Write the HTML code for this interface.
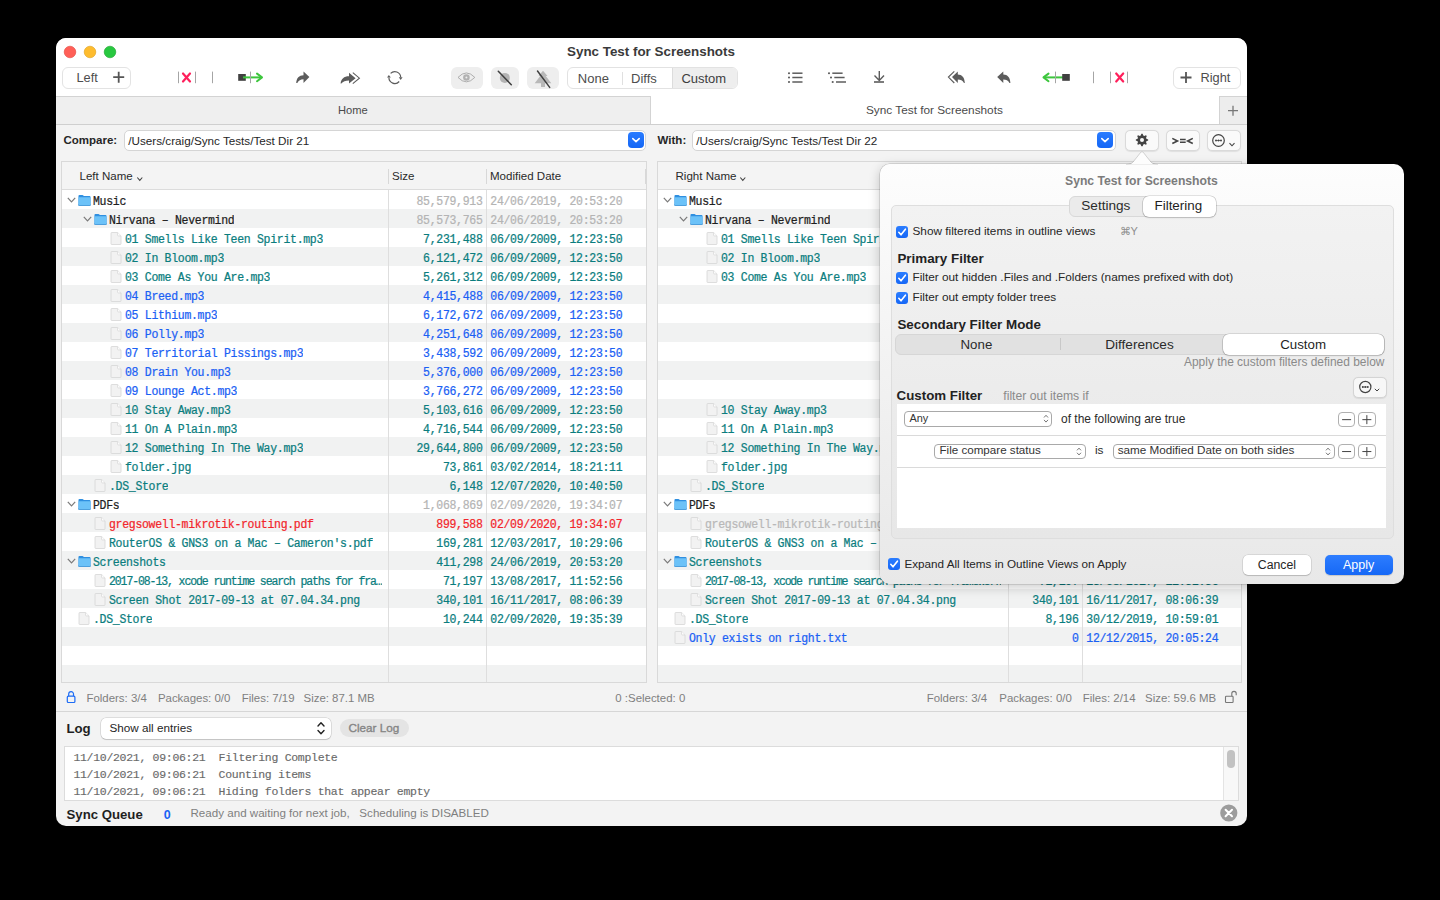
<!DOCTYPE html>
<html><head><meta charset="utf-8"><style>
*{margin:0;padding:0;box-sizing:border-box}
html,body{width:1440px;height:900px;background:#000;overflow:hidden;font-family:"Liberation Sans",sans-serif;}
.abs{position:absolute}
#win{position:absolute;left:56px;top:38px;width:1191px;height:788px;border-radius:10px;background:#f3f3f3;overflow:hidden}
#toolbar{position:absolute;left:0;top:0;width:1191px;height:58px;background:#ffffff}
.t{position:absolute;white-space:nowrap;line-height:1}
.tbl{position:absolute;border:1px solid #d9d9d9;background:#fff;overflow:hidden}
.thead{position:absolute;left:0;top:0;right:0;height:28px;background:#f4f4f4;border-bottom:1px solid #dcdcdc}
.th{position:absolute;top:9px;font-size:11.55px;color:#2a2a2a;white-space:nowrap;line-height:1}
.sort{margin-left:3px;position:relative;top:1.5px}
.hdiv{position:absolute;top:7px;width:1px;height:15px;background:#d8d8d8}
.tbody{position:absolute;left:0;top:28px;right:0;bottom:0}
.row{position:absolute;left:0;right:0;height:19px}
.nm,.sz{position:absolute;top:0;font-family:"Liberation Mono",monospace;font-size:11.5px;letter-spacing:-0.3px;line-height:19px;white-space:nowrap;padding-top:1.5px;-webkit-text-stroke:0.22px currentColor;transform:scaleY(1.07);transform-origin:0 14px}
.chev{position:absolute;top:7px;line-height:0}
.ico{position:absolute;line-height:0}
.vdiv{position:absolute;top:0;bottom:0;width:1px;background:#dedede}

.lbl{position:absolute;white-space:nowrap;line-height:1}
</style></head>
<body>
<div id="win">
<div id="toolbar"></div>
<div class="abs" style="left:0;top:58px;width:595px;height:28px;background:#efefef;border-top:1px solid #d3d3d3;border-right:1px solid #d3d3d3"></div>
<div class="abs" style="left:595px;top:58px;width:568px;height:28px;background:#ffffff"></div>
<div class="abs" style="left:1163px;top:58px;width:28px;height:28px;background:#ededed;border-top:1px solid #d3d3d3;border-left:1px solid #d3d3d3"></div>
<div class="abs" style="left:0;top:86px;width:1191px;height:1px;background:#cfcfcf"></div>
</div>
<div class="lbl" style="left:567px;top:45px;font-size:13.4px;font-weight:bold;color:#3a3a3a">Sync Test for Screenshots</div>
<div class="abs" style="left:62px;top:67px;width:69px;height:22px;border:1px solid #e3e3e3;border-radius:6px;background:#fff"></div>
<div class="lbl" style="left:76.5px;top:71.5px;font-size:12.8px;color:#4d4d4d">Left</div>
<div class="abs" style="left:1173px;top:67px;width:68px;height:22px;border:1px solid #e3e3e3;border-radius:6px;background:#fff"></div>
<div class="lbl" style="left:1200.5px;top:71.5px;font-size:12.8px;color:#4d4d4d">Right</div>
<div class="abs" style="left:451px;top:67px;width:32px;height:22px;border-radius:6px;background:#eeeeee"></div>
<div class="abs" style="left:491px;top:67px;width:28px;height:22px;border-radius:6px;background:#eeeeee"></div>
<div class="abs" style="left:527px;top:67px;width:32px;height:22px;border-radius:6px;background:#eeeeee"></div>
<div class="abs" style="left:567px;top:67px;width:171px;height:22px;border:1px solid #e2e2e2;border-radius:6px;background:#fff;overflow:hidden"><div class="abs" style="left:104px;top:0;width:66px;height:20px;background:#eeeeee;border-left:1px solid #dcdcdc"></div><div class="abs" style="left:53.5px;top:4px;width:1px;height:13px;background:#e0e0e0"></div></div>
<div class="lbl" style="left:577.8px;top:71.5px;font-size:13px;color:#4d4d4d">None</div>
<div class="lbl" style="left:631px;top:71.5px;font-size:13px;color:#4d4d4d">Diffs</div>
<div class="lbl" style="left:681.4px;top:71.5px;font-size:13px;color:#3d3d3d">Custom</div>
<div class="lbl" style="left:338px;top:104.5px;font-size:11.15px;color:#4a4a4a">Home</div>
<div class="lbl" style="left:866px;top:104.5px;font-size:11.8px;color:#4a4a4a">Sync Test for Screenshots</div>
<div class="lbl" style="left:63.5px;top:135px;font-size:11.5px;font-weight:bold;color:#262626">Compare:</div>
<div class="abs" style="left:124px;top:130px;width:522px;height:21px;border:1px solid #d5d5d5;border-radius:5px;background:#fff"></div>
<div class="lbl" style="left:128.3px;top:135px;font-size:11.7px;color:#262626">/Users/craig/Sync Tests/Test Dir 21</div>
<div class="abs" style="left:628px;top:132px;width:16px;height:16px;border-radius:4px;background:linear-gradient(#2a7cff,#1466f5)"></div><svg class="abs" style="left:628px;top:132px" width="16" height="16"><path d="M4.8 6.6 L8 9.6 L11.2 6.6" fill="none" stroke="#fff" stroke-width="1.6" stroke-linecap="round" stroke-linejoin="round"/></svg>
<div class="lbl" style="left:657.6px;top:135px;font-size:11.5px;font-weight:bold;color:#262626">With:</div>
<div class="abs" style="left:692px;top:130px;width:424px;height:21px;border:1px solid #d5d5d5;border-radius:5px;background:#fff"></div>
<div class="lbl" style="left:696.3px;top:135px;font-size:11.7px;color:#262626">/Users/craig/Sync Tests/Test Dir 22</div>
<div class="abs" style="left:1097px;top:132px;width:16px;height:16px;border-radius:4px;background:linear-gradient(#2a7cff,#1466f5)"></div><svg class="abs" style="left:1097px;top:132px" width="16" height="16"><path d="M4.8 6.6 L8 9.6 L11.2 6.6" fill="none" stroke="#fff" stroke-width="1.6" stroke-linecap="round" stroke-linejoin="round"/></svg>
<div class="abs" style="left:1125px;top:130px;width:34px;height:21px;border:1px solid #dadada;border-radius:5px;background:#fafafa;box-shadow:0 0.5px 1px rgba(0,0,0,0.08)"></div>
<div class="abs" style="left:1166px;top:130px;width:34px;height:21px;border:1px solid #dadada;border-radius:5px;background:#fafafa;box-shadow:0 0.5px 1px rgba(0,0,0,0.08)"></div>
<div class="abs" style="left:1207px;top:130px;width:34px;height:21px;border:1px solid #dadada;border-radius:5px;background:#fafafa;box-shadow:0 0.5px 1px rgba(0,0,0,0.08)"></div>
<svg class="abs" style="left:1160px;top:130px" width="40" height="20"><path d="M12.3 8.4 L17.5 10.95 L12.3 13.5 M32.8 8.4 L27.6 10.95 L32.8 13.5" fill="none" stroke="#444" stroke-width="1.6" stroke-linejoin="miter"/><path d="M20 9.6 H25.7 M20 12.3 H25.7" stroke="#444" stroke-width="1.5"/></svg>
<svg class="abs" style="left:1120px;top:125px" width="130" height="30"><polygon points="21.39,8.83 22.61,8.83 23.34,10.60 24.17,10.94 25.93,10.21 26.79,11.07 26.06,12.83 26.40,13.66 28.17,14.39 28.17,15.61 26.40,16.34 26.06,17.17 26.79,18.93 25.93,19.79 24.17,19.06 23.34,19.40 22.61,21.17 21.39,21.17 20.66,19.40 19.83,19.06 18.07,19.79 17.21,18.93 17.94,17.17 17.60,16.34 15.83,15.61 15.83,14.39 17.60,13.66 17.94,12.83 17.21,11.07 18.07,10.21 19.83,10.94 20.66,10.60" fill="#444"/><circle cx="22" cy="15" r="2" fill="#fafafa"/><circle cx="98.5" cy="15.5" r="5.8" fill="none" stroke="#444" stroke-width="1.2"/><path d="M95.5 15.5 H101.5" stroke="#444" stroke-width="0.7"/><circle cx="96" cy="15.5" r="0.9" fill="#444"/><circle cx="98.5" cy="15.5" r="0.9" fill="#444"/><circle cx="101" cy="15.5" r="0.9" fill="#444"/><path d="M109.5 18.2 L112 20.8 L114.5 18.2" fill="none" stroke="#444" stroke-width="1.1"/></svg>
<svg class="abs" style="left:0;top:0" width="1440" height="125"><circle cx="70" cy="52" r="5.8" fill="#ff5f57" stroke="#e2453c" stroke-width="0.6"/><circle cx="90" cy="52" r="5.8" fill="#febc2e" stroke="#de9f1a" stroke-width="0.6"/><circle cx="110" cy="52" r="5.8" fill="#28c840" stroke="#1aa32a" stroke-width="0.6"/><rect x="178.0" y="71.6" width="1" height="11.6" fill="#a5a5a5"/><rect x="195.0" y="71.6" width="1" height="11.6" fill="#a5a5a5"/><rect x="212.0" y="71.6" width="1" height="11.6" fill="#a5a5a5"/><path d="M183 73.5 L190 81.5 M190 73.5 L183 81.5" stroke="#ff1f5b" stroke-width="2.2" stroke-linecap="round"/><rect x="238.2" y="74" width="7.6" height="6.8" fill="#404040"/><path d="M243 77.4 H261.5" stroke="#3dc63d" stroke-width="2"/><path d="M257 73.6 L262 77.4 L257 81.2" fill="none" stroke="#3dc63d" stroke-width="2" stroke-linecap="round" stroke-linejoin="round"/><rect x="250.0" y="71.6" width="1" height="11.6" fill="#a5a5a5"/><path d="M303.5 71.5 L309.4 77 L303.5 82.9 L303.5 79.3 C300.5 79.3 298.8 80.5 297.3 82.9 L296.2 82.9 C296.6 78 299 75.2 303.5 75.2 Z" fill="#5c5c5c"/><path d="M349 72.7 L355.6 78.2 L349 83.5 L349 80.4 C345.5 80.4 343 81.3 341.3 83.5 L340.6 83.5 C341 79 344 76.3 349 76.3 Z" fill="#5c5c5c"/><path d="M352.8 72.6 L359.4 78.2 L352.8 83.6" fill="none" stroke="#5c5c5c" stroke-width="1.1"/><path d="M390.6 73.4 A5.9 5.9 0 0 1 400.7 77.2" fill="none" stroke="#5c5c5c" stroke-width="1.2"/><path d="M399.2 81.5 A5.9 5.9 0 0 1 388.9 77.6" fill="none" stroke="#5c5c5c" stroke-width="1.2"/><path d="M398.8 77.2 L402.6 77.2 L400.7 79.9 Z" fill="#5c5c5c"/><path d="M387 77.6 L390.8 77.6 L388.9 74.9 Z" fill="#5c5c5c"/><path d="M458 77.4 Q466.4 68.5 474.8 77.4 Q466.4 86.3 458 77.4 Z" fill="none" stroke="#a6a6a6" stroke-width="0.9"/><circle cx="466.4" cy="77.5" r="3.3" fill="#b2b2b2"/><circle cx="466.4" cy="77.5" r="1" fill="#eee"/><circle cx="504.8" cy="77.9" r="5" fill="#b3b3b3"/><path d="M498.3 71.3 L511.3 84.7" stroke="#3f3f3f" stroke-width="1.5" stroke-linecap="round"/><path d="M543 70.7 L547.5 76 L545.8 76 L551.3 83.2 L545 83.2 L545 87 L541 87 L541 83.2 L534.7 83.2 L540.2 76 L538.5 76 Z" fill="#b8b8b8"/><path d="M537.5 71 L549.7 87.4" stroke="#3f3f3f" stroke-width="1.5" stroke-linecap="round"/><circle cx="789" cy="73.2" r="1.05" fill="#5c5c5c"/><path d="M792.3 73.2 H802.5" stroke="#5c5c5c" stroke-width="1.5"/><circle cx="789" cy="77.5" r="1.05" fill="#5c5c5c"/><path d="M792.3 77.5 H802.5" stroke="#5c5c5c" stroke-width="1.5"/><circle cx="789" cy="82" r="1.05" fill="#5c5c5c"/><path d="M792.3 82 H802.5" stroke="#5c5c5c" stroke-width="1.5"/><circle cx="829" cy="73.2" r="1.05" fill="#5c5c5c"/><path d="M832.3 73.2 H842.6" stroke="#5c5c5c" stroke-width="1.5"/><circle cx="831" cy="77.5" r="1.05" fill="#5c5c5c"/><path d="M834.3 77.5 H844.6" stroke="#5c5c5c" stroke-width="1.5"/><circle cx="832.7" cy="82" r="1.05" fill="#5c5c5c"/><path d="M836.0 82 H846" stroke="#5c5c5c" stroke-width="1.5"/><path d="M879.3 70.9 V80.4 M874.5 75.6 L879.3 80.4 L884 75.6" fill="none" stroke="#5c5c5c" stroke-width="1.4"/><rect x="874" y="81.2" width="10" height="1.6" fill="#5c5c5c"/><path d="M952 77.1 L957.8 71.5 L957.8 74.6 C962 74.6 964.6 77.5 964.8 82.9 L964 82.9 C962.5 80.6 960.8 79.6 957.8 79.6 L957.8 82.9 Z" fill="#5c5c5c"/><path d="M954.3 71.3 L948.4 77.1 L954.3 83" fill="none" stroke="#5c5c5c" stroke-width="1.1"/><path d="M997.2 77.1 L1003.3 71.5 L1003.3 74.6 C1007.6 74.6 1010.1 77.5 1010.4 82.9 L1009.5 82.9 C1008 80.6 1006.3 79.6 1003.3 79.6 L1003.3 82.9 Z" fill="#5c5c5c"/><path d="M1044 77.4 H1064" stroke="#3dc63d" stroke-width="2"/><path d="M1048.5 73.6 L1043.5 77.4 L1048.5 81.2" fill="none" stroke="#3dc63d" stroke-width="2" stroke-linecap="round" stroke-linejoin="round"/><rect x="1062.2" y="74" width="7.6" height="6.8" fill="#404040"/><rect x="1055.0" y="71.6" width="1" height="11.6" fill="#a5a5a5"/><rect x="1093.0" y="71.6" width="1" height="11.6" fill="#a5a5a5"/><rect x="1110.0" y="71.6" width="1" height="11.6" fill="#a5a5a5"/><rect x="1127.0" y="71.6" width="1" height="11.6" fill="#a5a5a5"/><path d="M1116.2 73.5 L1123.2 81.5 M1123.2 73.5 L1116.2 81.5" stroke="#ff1f5b" stroke-width="2.2" stroke-linecap="round"/><path d="M118.7 71.7 V82.7 M113.2 77.2 H124.2" stroke="#555" stroke-width="1.8"/><path d="M1186 72 V83 M1180.5 77.5 H1191.5" stroke="#555" stroke-width="1.8"/><path d="M1233 105.7 V115.7 M1228 110.7 H1238" stroke="#777" stroke-width="1.3"/></svg>
<div class="tbl" style="left:61px;top:161px;width:586px;height:522px">
<div class="thead"><span class="th" style="left:17.5px">Left Name<svg class="sort" width="8" height="6" viewBox="0 0 8 6"><path d="M1.3 1.5 L3.8 4.3 L6.3 1.5" fill="none" stroke="#444" stroke-width="1.1"/></svg></span>
<span class="th" style="left:330px">Size</span><span class="th" style="left:428px">Modified Date</span>
<div class="hdiv" style="left:326px"></div><div class="hdiv" style="left:424px"></div><div class="hdiv" style="left:583px"></div>
</div>
<div class="tbody">
<div class="row" style="top:0px;background:#ffffff">
<span class="chev" style="left:5px"><svg width="9" height="6" viewBox="0 0 9 6"><path d="M0.8 0.8 L4.5 4.8 L8.2 0.8" fill="none" stroke="#7a7a7a" stroke-width="1.2"/></svg></span>
<span class="ico" style="left:15.5px;top:4.3px"><svg width="13" height="12.2" viewBox="0 0 14 13"><path d="M0.5 2.2 Q0.5 1 1.6 1 L4.8 1 Q5.4 1 5.8 1.5 L6.3 2 L12.4 2 Q13.5 2 13.5 3.1 L13.5 11.4 Q13.5 12.5 12.4 12.5 L1.6 12.5 Q0.5 12.5 0.5 11.4 Z" fill="#2f8fe0"/><path d="M0.5 4.3 Q0.5 3.4 1.5 3.4 L12.5 3.4 Q13.5 3.4 13.5 4.3 L13.5 11.4 Q13.5 12.5 12.4 12.5 L1.6 12.5 Q0.5 12.5 0.5 11.4 Z" fill="#6cc2f8"/><path d="M0.5 11.4 Q0.5 12.5 1.6 12.5 L12.4 12.5 Q13.5 12.5 13.5 11.4" fill="none" stroke="#3f8fd0" stroke-width="0.8"/></svg></span>
<span class="nm" style="left:31px;color:#1e1e1e;max-width:292px;overflow:hidden">Music</span>
<span class="sz" style="right:163.5px;color:#b4b4b4">85,579,913</span>
<span class="nm" style="left:428.3px;color:#b4b4b4">24/06/2019, 20:53:20</span>
</div>
<div class="row" style="top:19px;background:#f1f2f2">
<span class="chev" style="left:21px"><svg width="9" height="6" viewBox="0 0 9 6"><path d="M0.8 0.8 L4.5 4.8 L8.2 0.8" fill="none" stroke="#7a7a7a" stroke-width="1.2"/></svg></span>
<span class="ico" style="left:31.5px;top:4.3px"><svg width="13" height="12.2" viewBox="0 0 14 13"><path d="M0.5 2.2 Q0.5 1 1.6 1 L4.8 1 Q5.4 1 5.8 1.5 L6.3 2 L12.4 2 Q13.5 2 13.5 3.1 L13.5 11.4 Q13.5 12.5 12.4 12.5 L1.6 12.5 Q0.5 12.5 0.5 11.4 Z" fill="#2f8fe0"/><path d="M0.5 4.3 Q0.5 3.4 1.5 3.4 L12.5 3.4 Q13.5 3.4 13.5 4.3 L13.5 11.4 Q13.5 12.5 12.4 12.5 L1.6 12.5 Q0.5 12.5 0.5 11.4 Z" fill="#6cc2f8"/><path d="M0.5 11.4 Q0.5 12.5 1.6 12.5 L12.4 12.5 Q13.5 12.5 13.5 11.4" fill="none" stroke="#3f8fd0" stroke-width="0.8"/></svg></span>
<span class="nm" style="left:47px;color:#1e1e1e;max-width:276px;overflow:hidden">Nirvana – Nevermind</span>
<span class="sz" style="right:163.5px;color:#b4b4b4">85,573,765</span>
<span class="nm" style="left:428.3px;color:#b4b4b4">24/06/2019, 20:53:20</span>
</div>
<div class="row" style="top:38px;background:#ffffff">
<span class="ico" style="left:48px;top:4px"><svg width="12" height="13" viewBox="0 0 12 13"><path d="M1 1.2 Q1 0.5 1.7 0.5 L7.6 0.5 L11 3.9 L11 11.8 Q11 12.5 10.3 12.5 L1.7 12.5 Q1 12.5 1 11.8 Z" fill="#f2f2f2" stroke="#d6d6d6" stroke-width="0.8"/><path d="M7.6 0.5 L7.6 3.2 Q7.6 3.9 8.3 3.9 L11 3.9" fill="#ffffff" stroke="#d6d6d6" stroke-width="0.8"/></svg></span>
<span class="nm" style="left:63px;color:#0a7d7e;max-width:260px;overflow:hidden">01 Smells Like Teen Spirit.mp3</span>
<span class="sz" style="right:163.5px;color:#0a7d7e">7,231,488</span>
<span class="nm" style="left:428.3px;color:#0a7d7e">06/09/2009, 12:23:50</span>
</div>
<div class="row" style="top:57px;background:#f1f2f2">
<span class="ico" style="left:48px;top:4px"><svg width="12" height="13" viewBox="0 0 12 13"><path d="M1 1.2 Q1 0.5 1.7 0.5 L7.6 0.5 L11 3.9 L11 11.8 Q11 12.5 10.3 12.5 L1.7 12.5 Q1 12.5 1 11.8 Z" fill="#f2f2f2" stroke="#d6d6d6" stroke-width="0.8"/><path d="M7.6 0.5 L7.6 3.2 Q7.6 3.9 8.3 3.9 L11 3.9" fill="#ffffff" stroke="#d6d6d6" stroke-width="0.8"/></svg></span>
<span class="nm" style="left:63px;color:#0a7d7e;max-width:260px;overflow:hidden">02 In Bloom.mp3</span>
<span class="sz" style="right:163.5px;color:#0a7d7e">6,121,472</span>
<span class="nm" style="left:428.3px;color:#0a7d7e">06/09/2009, 12:23:50</span>
</div>
<div class="row" style="top:76px;background:#ffffff">
<span class="ico" style="left:48px;top:4px"><svg width="12" height="13" viewBox="0 0 12 13"><path d="M1 1.2 Q1 0.5 1.7 0.5 L7.6 0.5 L11 3.9 L11 11.8 Q11 12.5 10.3 12.5 L1.7 12.5 Q1 12.5 1 11.8 Z" fill="#f2f2f2" stroke="#d6d6d6" stroke-width="0.8"/><path d="M7.6 0.5 L7.6 3.2 Q7.6 3.9 8.3 3.9 L11 3.9" fill="#ffffff" stroke="#d6d6d6" stroke-width="0.8"/></svg></span>
<span class="nm" style="left:63px;color:#0a7d7e;max-width:260px;overflow:hidden">03 Come As You Are.mp3</span>
<span class="sz" style="right:163.5px;color:#0a7d7e">5,261,312</span>
<span class="nm" style="left:428.3px;color:#0a7d7e">06/09/2009, 12:23:50</span>
</div>
<div class="row" style="top:95px;background:#f1f2f2">
<span class="ico" style="left:48px;top:4px"><svg width="12" height="13" viewBox="0 0 12 13"><path d="M1 1.2 Q1 0.5 1.7 0.5 L7.6 0.5 L11 3.9 L11 11.8 Q11 12.5 10.3 12.5 L1.7 12.5 Q1 12.5 1 11.8 Z" fill="#f2f2f2" stroke="#d6d6d6" stroke-width="0.8"/><path d="M7.6 0.5 L7.6 3.2 Q7.6 3.9 8.3 3.9 L11 3.9" fill="#ffffff" stroke="#d6d6d6" stroke-width="0.8"/></svg></span>
<span class="nm" style="left:63px;color:#1a60f4;max-width:260px;overflow:hidden">04 Breed.mp3</span>
<span class="sz" style="right:163.5px;color:#1a60f4">4,415,488</span>
<span class="nm" style="left:428.3px;color:#1a60f4">06/09/2009, 12:23:50</span>
</div>
<div class="row" style="top:114px;background:#ffffff">
<span class="ico" style="left:48px;top:4px"><svg width="12" height="13" viewBox="0 0 12 13"><path d="M1 1.2 Q1 0.5 1.7 0.5 L7.6 0.5 L11 3.9 L11 11.8 Q11 12.5 10.3 12.5 L1.7 12.5 Q1 12.5 1 11.8 Z" fill="#f2f2f2" stroke="#d6d6d6" stroke-width="0.8"/><path d="M7.6 0.5 L7.6 3.2 Q7.6 3.9 8.3 3.9 L11 3.9" fill="#ffffff" stroke="#d6d6d6" stroke-width="0.8"/></svg></span>
<span class="nm" style="left:63px;color:#1a60f4;max-width:260px;overflow:hidden">05 Lithium.mp3</span>
<span class="sz" style="right:163.5px;color:#1a60f4">6,172,672</span>
<span class="nm" style="left:428.3px;color:#1a60f4">06/09/2009, 12:23:50</span>
</div>
<div class="row" style="top:133px;background:#f1f2f2">
<span class="ico" style="left:48px;top:4px"><svg width="12" height="13" viewBox="0 0 12 13"><path d="M1 1.2 Q1 0.5 1.7 0.5 L7.6 0.5 L11 3.9 L11 11.8 Q11 12.5 10.3 12.5 L1.7 12.5 Q1 12.5 1 11.8 Z" fill="#f2f2f2" stroke="#d6d6d6" stroke-width="0.8"/><path d="M7.6 0.5 L7.6 3.2 Q7.6 3.9 8.3 3.9 L11 3.9" fill="#ffffff" stroke="#d6d6d6" stroke-width="0.8"/></svg></span>
<span class="nm" style="left:63px;color:#1a60f4;max-width:260px;overflow:hidden">06 Polly.mp3</span>
<span class="sz" style="right:163.5px;color:#1a60f4">4,251,648</span>
<span class="nm" style="left:428.3px;color:#1a60f4">06/09/2009, 12:23:50</span>
</div>
<div class="row" style="top:152px;background:#ffffff">
<span class="ico" style="left:48px;top:4px"><svg width="12" height="13" viewBox="0 0 12 13"><path d="M1 1.2 Q1 0.5 1.7 0.5 L7.6 0.5 L11 3.9 L11 11.8 Q11 12.5 10.3 12.5 L1.7 12.5 Q1 12.5 1 11.8 Z" fill="#f2f2f2" stroke="#d6d6d6" stroke-width="0.8"/><path d="M7.6 0.5 L7.6 3.2 Q7.6 3.9 8.3 3.9 L11 3.9" fill="#ffffff" stroke="#d6d6d6" stroke-width="0.8"/></svg></span>
<span class="nm" style="left:63px;color:#1a60f4;max-width:260px;overflow:hidden">07 Territorial Pissings.mp3</span>
<span class="sz" style="right:163.5px;color:#1a60f4">3,438,592</span>
<span class="nm" style="left:428.3px;color:#1a60f4">06/09/2009, 12:23:50</span>
</div>
<div class="row" style="top:171px;background:#f1f2f2">
<span class="ico" style="left:48px;top:4px"><svg width="12" height="13" viewBox="0 0 12 13"><path d="M1 1.2 Q1 0.5 1.7 0.5 L7.6 0.5 L11 3.9 L11 11.8 Q11 12.5 10.3 12.5 L1.7 12.5 Q1 12.5 1 11.8 Z" fill="#f2f2f2" stroke="#d6d6d6" stroke-width="0.8"/><path d="M7.6 0.5 L7.6 3.2 Q7.6 3.9 8.3 3.9 L11 3.9" fill="#ffffff" stroke="#d6d6d6" stroke-width="0.8"/></svg></span>
<span class="nm" style="left:63px;color:#1a60f4;max-width:260px;overflow:hidden">08 Drain You.mp3</span>
<span class="sz" style="right:163.5px;color:#1a60f4">5,376,000</span>
<span class="nm" style="left:428.3px;color:#1a60f4">06/09/2009, 12:23:50</span>
</div>
<div class="row" style="top:190px;background:#ffffff">
<span class="ico" style="left:48px;top:4px"><svg width="12" height="13" viewBox="0 0 12 13"><path d="M1 1.2 Q1 0.5 1.7 0.5 L7.6 0.5 L11 3.9 L11 11.8 Q11 12.5 10.3 12.5 L1.7 12.5 Q1 12.5 1 11.8 Z" fill="#f2f2f2" stroke="#d6d6d6" stroke-width="0.8"/><path d="M7.6 0.5 L7.6 3.2 Q7.6 3.9 8.3 3.9 L11 3.9" fill="#ffffff" stroke="#d6d6d6" stroke-width="0.8"/></svg></span>
<span class="nm" style="left:63px;color:#1a60f4;max-width:260px;overflow:hidden">09 Lounge Act.mp3</span>
<span class="sz" style="right:163.5px;color:#1a60f4">3,766,272</span>
<span class="nm" style="left:428.3px;color:#1a60f4">06/09/2009, 12:23:50</span>
</div>
<div class="row" style="top:209px;background:#f1f2f2">
<span class="ico" style="left:48px;top:4px"><svg width="12" height="13" viewBox="0 0 12 13"><path d="M1 1.2 Q1 0.5 1.7 0.5 L7.6 0.5 L11 3.9 L11 11.8 Q11 12.5 10.3 12.5 L1.7 12.5 Q1 12.5 1 11.8 Z" fill="#f2f2f2" stroke="#d6d6d6" stroke-width="0.8"/><path d="M7.6 0.5 L7.6 3.2 Q7.6 3.9 8.3 3.9 L11 3.9" fill="#ffffff" stroke="#d6d6d6" stroke-width="0.8"/></svg></span>
<span class="nm" style="left:63px;color:#0a7d7e;max-width:260px;overflow:hidden">10 Stay Away.mp3</span>
<span class="sz" style="right:163.5px;color:#0a7d7e">5,103,616</span>
<span class="nm" style="left:428.3px;color:#0a7d7e">06/09/2009, 12:23:50</span>
</div>
<div class="row" style="top:228px;background:#ffffff">
<span class="ico" style="left:48px;top:4px"><svg width="12" height="13" viewBox="0 0 12 13"><path d="M1 1.2 Q1 0.5 1.7 0.5 L7.6 0.5 L11 3.9 L11 11.8 Q11 12.5 10.3 12.5 L1.7 12.5 Q1 12.5 1 11.8 Z" fill="#f2f2f2" stroke="#d6d6d6" stroke-width="0.8"/><path d="M7.6 0.5 L7.6 3.2 Q7.6 3.9 8.3 3.9 L11 3.9" fill="#ffffff" stroke="#d6d6d6" stroke-width="0.8"/></svg></span>
<span class="nm" style="left:63px;color:#0a7d7e;max-width:260px;overflow:hidden">11 On A Plain.mp3</span>
<span class="sz" style="right:163.5px;color:#0a7d7e">4,716,544</span>
<span class="nm" style="left:428.3px;color:#0a7d7e">06/09/2009, 12:23:50</span>
</div>
<div class="row" style="top:247px;background:#f1f2f2">
<span class="ico" style="left:48px;top:4px"><svg width="12" height="13" viewBox="0 0 12 13"><path d="M1 1.2 Q1 0.5 1.7 0.5 L7.6 0.5 L11 3.9 L11 11.8 Q11 12.5 10.3 12.5 L1.7 12.5 Q1 12.5 1 11.8 Z" fill="#f2f2f2" stroke="#d6d6d6" stroke-width="0.8"/><path d="M7.6 0.5 L7.6 3.2 Q7.6 3.9 8.3 3.9 L11 3.9" fill="#ffffff" stroke="#d6d6d6" stroke-width="0.8"/></svg></span>
<span class="nm" style="left:63px;color:#0a7d7e;max-width:260px;overflow:hidden">12 Something In The Way.mp3</span>
<span class="sz" style="right:163.5px;color:#0a7d7e">29,644,800</span>
<span class="nm" style="left:428.3px;color:#0a7d7e">06/09/2009, 12:23:50</span>
</div>
<div class="row" style="top:266px;background:#ffffff">
<span class="ico" style="left:48px;top:4px"><svg width="12" height="13" viewBox="0 0 12 13"><path d="M1 1.2 Q1 0.5 1.7 0.5 L7.6 0.5 L11 3.9 L11 11.8 Q11 12.5 10.3 12.5 L1.7 12.5 Q1 12.5 1 11.8 Z" fill="#f2f2f2" stroke="#d6d6d6" stroke-width="0.8"/><path d="M7.6 0.5 L7.6 3.2 Q7.6 3.9 8.3 3.9 L11 3.9" fill="#ffffff" stroke="#d6d6d6" stroke-width="0.8"/></svg></span>
<span class="nm" style="left:63px;color:#0a7d7e;max-width:260px;overflow:hidden">folder.jpg</span>
<span class="sz" style="right:163.5px;color:#0a7d7e">73,861</span>
<span class="nm" style="left:428.3px;color:#0a7d7e">03/02/2014, 18:21:11</span>
</div>
<div class="row" style="top:285px;background:#f1f2f2">
<span class="ico" style="left:32px;top:4px"><svg width="12" height="13" viewBox="0 0 12 13"><path d="M1 1.2 Q1 0.5 1.7 0.5 L7.6 0.5 L11 3.9 L11 11.8 Q11 12.5 10.3 12.5 L1.7 12.5 Q1 12.5 1 11.8 Z" fill="#f2f2f2" stroke="#d6d6d6" stroke-width="0.8"/><path d="M7.6 0.5 L7.6 3.2 Q7.6 3.9 8.3 3.9 L11 3.9" fill="#ffffff" stroke="#d6d6d6" stroke-width="0.8"/></svg></span>
<span class="nm" style="left:47px;color:#0a7d7e;max-width:276px;overflow:hidden">.DS_Store</span>
<span class="sz" style="right:163.5px;color:#0a7d7e">6,148</span>
<span class="nm" style="left:428.3px;color:#0a7d7e">12/07/2020, 10:40:50</span>
</div>
<div class="row" style="top:304px;background:#ffffff">
<span class="chev" style="left:5px"><svg width="9" height="6" viewBox="0 0 9 6"><path d="M0.8 0.8 L4.5 4.8 L8.2 0.8" fill="none" stroke="#7a7a7a" stroke-width="1.2"/></svg></span>
<span class="ico" style="left:15.5px;top:4.3px"><svg width="13" height="12.2" viewBox="0 0 14 13"><path d="M0.5 2.2 Q0.5 1 1.6 1 L4.8 1 Q5.4 1 5.8 1.5 L6.3 2 L12.4 2 Q13.5 2 13.5 3.1 L13.5 11.4 Q13.5 12.5 12.4 12.5 L1.6 12.5 Q0.5 12.5 0.5 11.4 Z" fill="#2f8fe0"/><path d="M0.5 4.3 Q0.5 3.4 1.5 3.4 L12.5 3.4 Q13.5 3.4 13.5 4.3 L13.5 11.4 Q13.5 12.5 12.4 12.5 L1.6 12.5 Q0.5 12.5 0.5 11.4 Z" fill="#6cc2f8"/><path d="M0.5 11.4 Q0.5 12.5 1.6 12.5 L12.4 12.5 Q13.5 12.5 13.5 11.4" fill="none" stroke="#3f8fd0" stroke-width="0.8"/></svg></span>
<span class="nm" style="left:31px;color:#1e1e1e;max-width:292px;overflow:hidden">PDFs</span>
<span class="sz" style="right:163.5px;color:#b4b4b4">1,068,869</span>
<span class="nm" style="left:428.3px;color:#b4b4b4">02/09/2020, 19:34:07</span>
</div>
<div class="row" style="top:323px;background:#f1f2f2">
<span class="ico" style="left:32px;top:4px"><svg width="12" height="13" viewBox="0 0 12 13"><path d="M1 1.2 Q1 0.5 1.7 0.5 L7.6 0.5 L11 3.9 L11 11.8 Q11 12.5 10.3 12.5 L1.7 12.5 Q1 12.5 1 11.8 Z" fill="#f2f2f2" stroke="#d6d6d6" stroke-width="0.8"/><path d="M7.6 0.5 L7.6 3.2 Q7.6 3.9 8.3 3.9 L11 3.9" fill="#ffffff" stroke="#d6d6d6" stroke-width="0.8"/></svg></span>
<span class="nm" style="left:47px;color:#f2262c;max-width:276px;overflow:hidden">gregsowell-mikrotik-routing.pdf</span>
<span class="sz" style="right:163.5px;color:#f2262c">899,588</span>
<span class="nm" style="left:428.3px;color:#f2262c">02/09/2020, 19:34:07</span>
</div>
<div class="row" style="top:342px;background:#ffffff">
<span class="ico" style="left:32px;top:4px"><svg width="12" height="13" viewBox="0 0 12 13"><path d="M1 1.2 Q1 0.5 1.7 0.5 L7.6 0.5 L11 3.9 L11 11.8 Q11 12.5 10.3 12.5 L1.7 12.5 Q1 12.5 1 11.8 Z" fill="#f2f2f2" stroke="#d6d6d6" stroke-width="0.8"/><path d="M7.6 0.5 L7.6 3.2 Q7.6 3.9 8.3 3.9 L11 3.9" fill="#ffffff" stroke="#d6d6d6" stroke-width="0.8"/></svg></span>
<span class="nm" style="left:47px;color:#0a7d7e;max-width:276px;overflow:hidden">RouterOS &amp; GNS3 on a Mac – Cameron's.pdf</span>
<span class="sz" style="right:163.5px;color:#0a7d7e">169,281</span>
<span class="nm" style="left:428.3px;color:#0a7d7e">12/03/2017, 10:29:06</span>
</div>
<div class="row" style="top:361px;background:#f1f2f2">
<span class="chev" style="left:5px"><svg width="9" height="6" viewBox="0 0 9 6"><path d="M0.8 0.8 L4.5 4.8 L8.2 0.8" fill="none" stroke="#7a7a7a" stroke-width="1.2"/></svg></span>
<span class="ico" style="left:15.5px;top:4.3px"><svg width="13" height="12.2" viewBox="0 0 14 13"><path d="M0.5 2.2 Q0.5 1 1.6 1 L4.8 1 Q5.4 1 5.8 1.5 L6.3 2 L12.4 2 Q13.5 2 13.5 3.1 L13.5 11.4 Q13.5 12.5 12.4 12.5 L1.6 12.5 Q0.5 12.5 0.5 11.4 Z" fill="#2f8fe0"/><path d="M0.5 4.3 Q0.5 3.4 1.5 3.4 L12.5 3.4 Q13.5 3.4 13.5 4.3 L13.5 11.4 Q13.5 12.5 12.4 12.5 L1.6 12.5 Q0.5 12.5 0.5 11.4 Z" fill="#6cc2f8"/><path d="M0.5 11.4 Q0.5 12.5 1.6 12.5 L12.4 12.5 Q13.5 12.5 13.5 11.4" fill="none" stroke="#3f8fd0" stroke-width="0.8"/></svg></span>
<span class="nm" style="left:31px;color:#0a7d7e;max-width:292px;overflow:hidden">Screenshots</span>
<span class="sz" style="right:163.5px;color:#0a7d7e">411,298</span>
<span class="nm" style="left:428.3px;color:#0a7d7e">24/06/2019, 20:53:20</span>
</div>
<div class="row" style="top:380px;background:#ffffff">
<span class="ico" style="left:32px;top:4px"><svg width="12" height="13" viewBox="0 0 12 13"><path d="M1 1.2 Q1 0.5 1.7 0.5 L7.6 0.5 L11 3.9 L11 11.8 Q11 12.5 10.3 12.5 L1.7 12.5 Q1 12.5 1 11.8 Z" fill="#f2f2f2" stroke="#d6d6d6" stroke-width="0.8"/><path d="M7.6 0.5 L7.6 3.2 Q7.6 3.9 8.3 3.9 L11 3.9" fill="#ffffff" stroke="#d6d6d6" stroke-width="0.8"/></svg></span>
<span class="nm" style="left:47px;color:#0a7d7e;max-width:276px;overflow:hidden;letter-spacing:-1.1px">2017-08-13, xcode runtime search paths for fra…</span>
<span class="sz" style="right:163.5px;color:#0a7d7e">71,197</span>
<span class="nm" style="left:428.3px;color:#0a7d7e">13/08/2017, 11:52:56</span>
</div>
<div class="row" style="top:399px;background:#f1f2f2">
<span class="ico" style="left:32px;top:4px"><svg width="12" height="13" viewBox="0 0 12 13"><path d="M1 1.2 Q1 0.5 1.7 0.5 L7.6 0.5 L11 3.9 L11 11.8 Q11 12.5 10.3 12.5 L1.7 12.5 Q1 12.5 1 11.8 Z" fill="#f2f2f2" stroke="#d6d6d6" stroke-width="0.8"/><path d="M7.6 0.5 L7.6 3.2 Q7.6 3.9 8.3 3.9 L11 3.9" fill="#ffffff" stroke="#d6d6d6" stroke-width="0.8"/></svg></span>
<span class="nm" style="left:47px;color:#0a7d7e;max-width:276px;overflow:hidden">Screen Shot 2017-09-13 at 07.04.34.png</span>
<span class="sz" style="right:163.5px;color:#0a7d7e">340,101</span>
<span class="nm" style="left:428.3px;color:#0a7d7e">16/11/2017, 08:06:39</span>
</div>
<div class="row" style="top:418px;background:#ffffff">
<span class="ico" style="left:16px;top:4px"><svg width="12" height="13" viewBox="0 0 12 13"><path d="M1 1.2 Q1 0.5 1.7 0.5 L7.6 0.5 L11 3.9 L11 11.8 Q11 12.5 10.3 12.5 L1.7 12.5 Q1 12.5 1 11.8 Z" fill="#f2f2f2" stroke="#d6d6d6" stroke-width="0.8"/><path d="M7.6 0.5 L7.6 3.2 Q7.6 3.9 8.3 3.9 L11 3.9" fill="#ffffff" stroke="#d6d6d6" stroke-width="0.8"/></svg></span>
<span class="nm" style="left:31px;color:#0a7d7e;max-width:292px;overflow:hidden">.DS_Store</span>
<span class="sz" style="right:163.5px;color:#0a7d7e">10,244</span>
<span class="nm" style="left:428.3px;color:#0a7d7e">02/09/2020, 19:35:39</span>
</div>
<div class="row" style="top:437px;background:#f1f2f2">
</div>
<div class="row" style="top:456px;background:#ffffff">
</div>
<div class="row" style="top:475px;background:#f1f2f2">
</div>
<div class="vdiv" style="left:326px"></div><div class="vdiv" style="left:424px"></div>
</div></div><div class="tbl" style="left:657px;top:161px;width:585px;height:522px">
<div class="thead"><span class="th" style="left:17.5px">Right Name<svg class="sort" width="8" height="6" viewBox="0 0 8 6"><path d="M1.3 1.5 L3.8 4.3 L6.3 1.5" fill="none" stroke="#444" stroke-width="1.1"/></svg></span>
<div class="hdiv" style="left:350px"></div><div class="hdiv" style="left:424px"></div><div class="hdiv" style="left:582px"></div>
</div>
<div class="tbody">
<div class="row" style="top:0px;background:#ffffff">
<span class="chev" style="left:5px"><svg width="9" height="6" viewBox="0 0 9 6"><path d="M0.8 0.8 L4.5 4.8 L8.2 0.8" fill="none" stroke="#7a7a7a" stroke-width="1.2"/></svg></span>
<span class="ico" style="left:15.5px;top:4.3px"><svg width="13" height="12.2" viewBox="0 0 14 13"><path d="M0.5 2.2 Q0.5 1 1.6 1 L4.8 1 Q5.4 1 5.8 1.5 L6.3 2 L12.4 2 Q13.5 2 13.5 3.1 L13.5 11.4 Q13.5 12.5 12.4 12.5 L1.6 12.5 Q0.5 12.5 0.5 11.4 Z" fill="#2f8fe0"/><path d="M0.5 4.3 Q0.5 3.4 1.5 3.4 L12.5 3.4 Q13.5 3.4 13.5 4.3 L13.5 11.4 Q13.5 12.5 12.4 12.5 L1.6 12.5 Q0.5 12.5 0.5 11.4 Z" fill="#6cc2f8"/><path d="M0.5 11.4 Q0.5 12.5 1.6 12.5 L12.4 12.5 Q13.5 12.5 13.5 11.4" fill="none" stroke="#3f8fd0" stroke-width="0.8"/></svg></span>
<span class="nm" style="left:31px;color:#1e1e1e;max-width:316px;overflow:hidden">Music</span>
</div>
<div class="row" style="top:19px;background:#f1f2f2">
<span class="chev" style="left:21px"><svg width="9" height="6" viewBox="0 0 9 6"><path d="M0.8 0.8 L4.5 4.8 L8.2 0.8" fill="none" stroke="#7a7a7a" stroke-width="1.2"/></svg></span>
<span class="ico" style="left:31.5px;top:4.3px"><svg width="13" height="12.2" viewBox="0 0 14 13"><path d="M0.5 2.2 Q0.5 1 1.6 1 L4.8 1 Q5.4 1 5.8 1.5 L6.3 2 L12.4 2 Q13.5 2 13.5 3.1 L13.5 11.4 Q13.5 12.5 12.4 12.5 L1.6 12.5 Q0.5 12.5 0.5 11.4 Z" fill="#2f8fe0"/><path d="M0.5 4.3 Q0.5 3.4 1.5 3.4 L12.5 3.4 Q13.5 3.4 13.5 4.3 L13.5 11.4 Q13.5 12.5 12.4 12.5 L1.6 12.5 Q0.5 12.5 0.5 11.4 Z" fill="#6cc2f8"/><path d="M0.5 11.4 Q0.5 12.5 1.6 12.5 L12.4 12.5 Q13.5 12.5 13.5 11.4" fill="none" stroke="#3f8fd0" stroke-width="0.8"/></svg></span>
<span class="nm" style="left:47px;color:#1e1e1e;max-width:300px;overflow:hidden">Nirvana – Nevermind</span>
</div>
<div class="row" style="top:38px;background:#ffffff">
<span class="ico" style="left:48px;top:4px"><svg width="12" height="13" viewBox="0 0 12 13"><path d="M1 1.2 Q1 0.5 1.7 0.5 L7.6 0.5 L11 3.9 L11 11.8 Q11 12.5 10.3 12.5 L1.7 12.5 Q1 12.5 1 11.8 Z" fill="#f2f2f2" stroke="#d6d6d6" stroke-width="0.8"/><path d="M7.6 0.5 L7.6 3.2 Q7.6 3.9 8.3 3.9 L11 3.9" fill="#ffffff" stroke="#d6d6d6" stroke-width="0.8"/></svg></span>
<span class="nm" style="left:63px;color:#0a7d7e;max-width:284px;overflow:hidden">01 Smells Like Teen Spirit.mp3</span>
</div>
<div class="row" style="top:57px;background:#f1f2f2">
<span class="ico" style="left:48px;top:4px"><svg width="12" height="13" viewBox="0 0 12 13"><path d="M1 1.2 Q1 0.5 1.7 0.5 L7.6 0.5 L11 3.9 L11 11.8 Q11 12.5 10.3 12.5 L1.7 12.5 Q1 12.5 1 11.8 Z" fill="#f2f2f2" stroke="#d6d6d6" stroke-width="0.8"/><path d="M7.6 0.5 L7.6 3.2 Q7.6 3.9 8.3 3.9 L11 3.9" fill="#ffffff" stroke="#d6d6d6" stroke-width="0.8"/></svg></span>
<span class="nm" style="left:63px;color:#0a7d7e;max-width:284px;overflow:hidden">02 In Bloom.mp3</span>
</div>
<div class="row" style="top:76px;background:#ffffff">
<span class="ico" style="left:48px;top:4px"><svg width="12" height="13" viewBox="0 0 12 13"><path d="M1 1.2 Q1 0.5 1.7 0.5 L7.6 0.5 L11 3.9 L11 11.8 Q11 12.5 10.3 12.5 L1.7 12.5 Q1 12.5 1 11.8 Z" fill="#f2f2f2" stroke="#d6d6d6" stroke-width="0.8"/><path d="M7.6 0.5 L7.6 3.2 Q7.6 3.9 8.3 3.9 L11 3.9" fill="#ffffff" stroke="#d6d6d6" stroke-width="0.8"/></svg></span>
<span class="nm" style="left:63px;color:#0a7d7e;max-width:284px;overflow:hidden">03 Come As You Are.mp3</span>
</div>
<div class="row" style="top:95px;background:#f1f2f2">
</div>
<div class="row" style="top:114px;background:#ffffff">
</div>
<div class="row" style="top:133px;background:#f1f2f2">
</div>
<div class="row" style="top:152px;background:#ffffff">
</div>
<div class="row" style="top:171px;background:#f1f2f2">
</div>
<div class="row" style="top:190px;background:#ffffff">
</div>
<div class="row" style="top:209px;background:#f1f2f2">
<span class="ico" style="left:48px;top:4px"><svg width="12" height="13" viewBox="0 0 12 13"><path d="M1 1.2 Q1 0.5 1.7 0.5 L7.6 0.5 L11 3.9 L11 11.8 Q11 12.5 10.3 12.5 L1.7 12.5 Q1 12.5 1 11.8 Z" fill="#f2f2f2" stroke="#d6d6d6" stroke-width="0.8"/><path d="M7.6 0.5 L7.6 3.2 Q7.6 3.9 8.3 3.9 L11 3.9" fill="#ffffff" stroke="#d6d6d6" stroke-width="0.8"/></svg></span>
<span class="nm" style="left:63px;color:#0a7d7e;max-width:284px;overflow:hidden">10 Stay Away.mp3</span>
</div>
<div class="row" style="top:228px;background:#ffffff">
<span class="ico" style="left:48px;top:4px"><svg width="12" height="13" viewBox="0 0 12 13"><path d="M1 1.2 Q1 0.5 1.7 0.5 L7.6 0.5 L11 3.9 L11 11.8 Q11 12.5 10.3 12.5 L1.7 12.5 Q1 12.5 1 11.8 Z" fill="#f2f2f2" stroke="#d6d6d6" stroke-width="0.8"/><path d="M7.6 0.5 L7.6 3.2 Q7.6 3.9 8.3 3.9 L11 3.9" fill="#ffffff" stroke="#d6d6d6" stroke-width="0.8"/></svg></span>
<span class="nm" style="left:63px;color:#0a7d7e;max-width:284px;overflow:hidden">11 On A Plain.mp3</span>
</div>
<div class="row" style="top:247px;background:#f1f2f2">
<span class="ico" style="left:48px;top:4px"><svg width="12" height="13" viewBox="0 0 12 13"><path d="M1 1.2 Q1 0.5 1.7 0.5 L7.6 0.5 L11 3.9 L11 11.8 Q11 12.5 10.3 12.5 L1.7 12.5 Q1 12.5 1 11.8 Z" fill="#f2f2f2" stroke="#d6d6d6" stroke-width="0.8"/><path d="M7.6 0.5 L7.6 3.2 Q7.6 3.9 8.3 3.9 L11 3.9" fill="#ffffff" stroke="#d6d6d6" stroke-width="0.8"/></svg></span>
<span class="nm" style="left:63px;color:#0a7d7e;max-width:284px;overflow:hidden">12 Something In The Way.mp3</span>
</div>
<div class="row" style="top:266px;background:#ffffff">
<span class="ico" style="left:48px;top:4px"><svg width="12" height="13" viewBox="0 0 12 13"><path d="M1 1.2 Q1 0.5 1.7 0.5 L7.6 0.5 L11 3.9 L11 11.8 Q11 12.5 10.3 12.5 L1.7 12.5 Q1 12.5 1 11.8 Z" fill="#f2f2f2" stroke="#d6d6d6" stroke-width="0.8"/><path d="M7.6 0.5 L7.6 3.2 Q7.6 3.9 8.3 3.9 L11 3.9" fill="#ffffff" stroke="#d6d6d6" stroke-width="0.8"/></svg></span>
<span class="nm" style="left:63px;color:#0a7d7e;max-width:284px;overflow:hidden">folder.jpg</span>
</div>
<div class="row" style="top:285px;background:#f1f2f2">
<span class="ico" style="left:32px;top:4px"><svg width="12" height="13" viewBox="0 0 12 13"><path d="M1 1.2 Q1 0.5 1.7 0.5 L7.6 0.5 L11 3.9 L11 11.8 Q11 12.5 10.3 12.5 L1.7 12.5 Q1 12.5 1 11.8 Z" fill="#f2f2f2" stroke="#d6d6d6" stroke-width="0.8"/><path d="M7.6 0.5 L7.6 3.2 Q7.6 3.9 8.3 3.9 L11 3.9" fill="#ffffff" stroke="#d6d6d6" stroke-width="0.8"/></svg></span>
<span class="nm" style="left:47px;color:#0a7d7e;max-width:300px;overflow:hidden">.DS_Store</span>
</div>
<div class="row" style="top:304px;background:#ffffff">
<span class="chev" style="left:5px"><svg width="9" height="6" viewBox="0 0 9 6"><path d="M0.8 0.8 L4.5 4.8 L8.2 0.8" fill="none" stroke="#7a7a7a" stroke-width="1.2"/></svg></span>
<span class="ico" style="left:15.5px;top:4.3px"><svg width="13" height="12.2" viewBox="0 0 14 13"><path d="M0.5 2.2 Q0.5 1 1.6 1 L4.8 1 Q5.4 1 5.8 1.5 L6.3 2 L12.4 2 Q13.5 2 13.5 3.1 L13.5 11.4 Q13.5 12.5 12.4 12.5 L1.6 12.5 Q0.5 12.5 0.5 11.4 Z" fill="#2f8fe0"/><path d="M0.5 4.3 Q0.5 3.4 1.5 3.4 L12.5 3.4 Q13.5 3.4 13.5 4.3 L13.5 11.4 Q13.5 12.5 12.4 12.5 L1.6 12.5 Q0.5 12.5 0.5 11.4 Z" fill="#6cc2f8"/><path d="M0.5 11.4 Q0.5 12.5 1.6 12.5 L12.4 12.5 Q13.5 12.5 13.5 11.4" fill="none" stroke="#3f8fd0" stroke-width="0.8"/></svg></span>
<span class="nm" style="left:31px;color:#1e1e1e;max-width:316px;overflow:hidden">PDFs</span>
</div>
<div class="row" style="top:323px;background:#f1f2f2">
<span class="ico" style="left:32px;top:4px"><svg width="12" height="13" viewBox="0 0 12 13"><path d="M1 1.2 Q1 0.5 1.7 0.5 L7.6 0.5 L11 3.9 L11 11.8 Q11 12.5 10.3 12.5 L1.7 12.5 Q1 12.5 1 11.8 Z" fill="#f2f2f2" stroke="#d6d6d6" stroke-width="0.8"/><path d="M7.6 0.5 L7.6 3.2 Q7.6 3.9 8.3 3.9 L11 3.9" fill="#ffffff" stroke="#d6d6d6" stroke-width="0.8"/></svg></span>
<span class="nm" style="left:47px;color:#b8b8b8;max-width:300px;overflow:hidden">gregsowell-mikrotik-routing.pdf</span>
</div>
<div class="row" style="top:342px;background:#ffffff">
<span class="ico" style="left:32px;top:4px"><svg width="12" height="13" viewBox="0 0 12 13"><path d="M1 1.2 Q1 0.5 1.7 0.5 L7.6 0.5 L11 3.9 L11 11.8 Q11 12.5 10.3 12.5 L1.7 12.5 Q1 12.5 1 11.8 Z" fill="#f2f2f2" stroke="#d6d6d6" stroke-width="0.8"/><path d="M7.6 0.5 L7.6 3.2 Q7.6 3.9 8.3 3.9 L11 3.9" fill="#ffffff" stroke="#d6d6d6" stroke-width="0.8"/></svg></span>
<span class="nm" style="left:47px;color:#0a7d7e;max-width:300px;overflow:hidden">RouterOS &amp; GNS3 on a Mac – Cameron's.pdf</span>
</div>
<div class="row" style="top:361px;background:#f1f2f2">
<span class="chev" style="left:5px"><svg width="9" height="6" viewBox="0 0 9 6"><path d="M0.8 0.8 L4.5 4.8 L8.2 0.8" fill="none" stroke="#7a7a7a" stroke-width="1.2"/></svg></span>
<span class="ico" style="left:15.5px;top:4.3px"><svg width="13" height="12.2" viewBox="0 0 14 13"><path d="M0.5 2.2 Q0.5 1 1.6 1 L4.8 1 Q5.4 1 5.8 1.5 L6.3 2 L12.4 2 Q13.5 2 13.5 3.1 L13.5 11.4 Q13.5 12.5 12.4 12.5 L1.6 12.5 Q0.5 12.5 0.5 11.4 Z" fill="#2f8fe0"/><path d="M0.5 4.3 Q0.5 3.4 1.5 3.4 L12.5 3.4 Q13.5 3.4 13.5 4.3 L13.5 11.4 Q13.5 12.5 12.4 12.5 L1.6 12.5 Q0.5 12.5 0.5 11.4 Z" fill="#6cc2f8"/><path d="M0.5 11.4 Q0.5 12.5 1.6 12.5 L12.4 12.5 Q13.5 12.5 13.5 11.4" fill="none" stroke="#3f8fd0" stroke-width="0.8"/></svg></span>
<span class="nm" style="left:31px;color:#0a7d7e;max-width:316px;overflow:hidden">Screenshots</span>
</div>
<div class="row" style="top:380px;background:#ffffff">
<span class="ico" style="left:32px;top:4px"><svg width="12" height="13" viewBox="0 0 12 13"><path d="M1 1.2 Q1 0.5 1.7 0.5 L7.6 0.5 L11 3.9 L11 11.8 Q11 12.5 10.3 12.5 L1.7 12.5 Q1 12.5 1 11.8 Z" fill="#f2f2f2" stroke="#d6d6d6" stroke-width="0.8"/><path d="M7.6 0.5 L7.6 3.2 Q7.6 3.9 8.3 3.9 L11 3.9" fill="#ffffff" stroke="#d6d6d6" stroke-width="0.8"/></svg></span>
<span class="nm" style="left:47px;color:#0a7d7e;max-width:300px;overflow:hidden;letter-spacing:-1.21px">2017-08-13, xcode runtime search paths for framework</span>
<span class="sz" style="right:162.5px;color:#0a7d7e">71,197</span>
<span class="nm" style="left:428.3px;color:#0a7d7e">13/08/2017, 11:52:56</span>
</div>
<div class="row" style="top:399px;background:#f1f2f2">
<span class="ico" style="left:32px;top:4px"><svg width="12" height="13" viewBox="0 0 12 13"><path d="M1 1.2 Q1 0.5 1.7 0.5 L7.6 0.5 L11 3.9 L11 11.8 Q11 12.5 10.3 12.5 L1.7 12.5 Q1 12.5 1 11.8 Z" fill="#f2f2f2" stroke="#d6d6d6" stroke-width="0.8"/><path d="M7.6 0.5 L7.6 3.2 Q7.6 3.9 8.3 3.9 L11 3.9" fill="#ffffff" stroke="#d6d6d6" stroke-width="0.8"/></svg></span>
<span class="nm" style="left:47px;color:#0a7d7e;max-width:300px;overflow:hidden">Screen Shot 2017-09-13 at 07.04.34.png</span>
<span class="sz" style="right:162.5px;color:#0a7d7e">340,101</span>
<span class="nm" style="left:428.3px;color:#0a7d7e">16/11/2017, 08:06:39</span>
</div>
<div class="row" style="top:418px;background:#ffffff">
<span class="ico" style="left:16px;top:4px"><svg width="12" height="13" viewBox="0 0 12 13"><path d="M1 1.2 Q1 0.5 1.7 0.5 L7.6 0.5 L11 3.9 L11 11.8 Q11 12.5 10.3 12.5 L1.7 12.5 Q1 12.5 1 11.8 Z" fill="#f2f2f2" stroke="#d6d6d6" stroke-width="0.8"/><path d="M7.6 0.5 L7.6 3.2 Q7.6 3.9 8.3 3.9 L11 3.9" fill="#ffffff" stroke="#d6d6d6" stroke-width="0.8"/></svg></span>
<span class="nm" style="left:31px;color:#0a7d7e;max-width:316px;overflow:hidden">.DS_Store</span>
<span class="sz" style="right:162.5px;color:#0a7d7e">8,196</span>
<span class="nm" style="left:428.3px;color:#0a7d7e">30/12/2019, 10:59:01</span>
</div>
<div class="row" style="top:437px;background:#f1f2f2">
<span class="ico" style="left:16px;top:4px"><svg width="12" height="13" viewBox="0 0 12 13"><path d="M1 1.2 Q1 0.5 1.7 0.5 L7.6 0.5 L11 3.9 L11 11.8 Q11 12.5 10.3 12.5 L1.7 12.5 Q1 12.5 1 11.8 Z" fill="#f2f2f2" stroke="#d6d6d6" stroke-width="0.8"/><path d="M7.6 0.5 L7.6 3.2 Q7.6 3.9 8.3 3.9 L11 3.9" fill="#ffffff" stroke="#d6d6d6" stroke-width="0.8"/></svg></span>
<span class="nm" style="left:31px;color:#1a60f4;max-width:316px;overflow:hidden">Only exists on right.txt</span>
<span class="sz" style="right:162.5px;color:#1a60f4">0</span>
<span class="nm" style="left:428.3px;color:#1a60f4">12/12/2015, 20:05:24</span>
</div>
<div class="row" style="top:456px;background:#ffffff">
</div>
<div class="row" style="top:475px;background:#f1f2f2">
</div>
<div class="vdiv" style="left:350px"></div><div class="vdiv" style="left:424px"></div>
</div></div>
<svg class="abs" style="left:60px;top:686px" width="20" height="20"><rect x="7.3" y="10.2" width="7.6" height="6.3" rx="1" fill="none" stroke="#1d6cf5" stroke-width="1.2"/><path d="M8.7 10.2 V8 A2.4 2.4 0 0 1 13.5 8 V10.2" fill="none" stroke="#1d6cf5" stroke-width="1.2"/></svg>
<div class="lbl" style="left:86.4px;top:692.5px;font-size:11.45px;color:#7f7f7f">Folders: 3/4</div>
<div class="lbl" style="left:157.9px;top:692.5px;font-size:11.45px;color:#7f7f7f">Packages: 0/0</div>
<div class="lbl" style="left:241.8px;top:692.5px;font-size:11.45px;color:#7f7f7f">Files: 7/19</div>
<div class="lbl" style="left:303.5px;top:692.5px;font-size:11.45px;color:#7f7f7f">Size: 87.1 MB</div>
<div class="lbl" style="left:926.7px;top:692.5px;font-size:11.45px;color:#7f7f7f">Folders: 3/4</div>
<div class="lbl" style="left:999.3px;top:692.5px;font-size:11.45px;color:#7f7f7f">Packages: 0/0</div>
<div class="lbl" style="left:1082.8px;top:692.5px;font-size:11.45px;color:#7f7f7f">Files: 2/14</div>
<div class="lbl" style="left:1145px;top:692.5px;font-size:11.45px;color:#7f7f7f">Size: 59.6 MB</div>
<div class="lbl" style="left:615.3px;top:692.5px;font-size:11.45px;color:#7f7f7f">0 :Selected: 0</div>
<svg class="abs" style="left:1220px;top:686px" width="24" height="20"><rect x="5.5" y="10.2" width="7.6" height="6.3" rx="0.8" fill="none" stroke="#777" stroke-width="1.1"/><path d="M11.8 10.2 V7.6 A2.2 2.2 0 0 1 16.2 7.6 V9.2" fill="none" stroke="#777" stroke-width="1.1"/></svg>
<div class="abs" style="left:56px;top:711px;width:1191px;height:1px;background:#d6d6d6"></div>
<div class="lbl" style="left:66.5px;top:722px;font-size:13.2px;font-weight:bold;color:#1f1f1f">Log</div>
<div class="abs" style="left:101px;top:718px;width:230px;height:20.5px;border-radius:5px;background:#fff;box-shadow:0 0 0 0.5px rgba(0,0,0,0.18),0 1px 1px rgba(0,0,0,0.12)"></div>
<div class="lbl" style="left:109.5px;top:721.5px;font-size:11.7px;color:#262626">Show all entries</div>
<svg class="abs" style="left:314px;top:718px" width="16" height="20"><path d="M4 8 L7 4.8 L10 8 M4 12.6 L7 15.8 L10 12.6" fill="none" stroke="#222" stroke-width="1.4" stroke-linecap="round" stroke-linejoin="round"/></svg>
<div class="abs" style="left:339.6px;top:719px;width:69px;height:18px;border-radius:9px;background:#e4e4e4"></div>
<div class="lbl" style="left:348.5px;top:721.5px;font-size:11.7px;color:#858585;-webkit-text-stroke:0.35px currentColor">Clear Log</div>
<div class="abs" style="left:64px;top:746px;width:1175px;height:55px;background:#fff;border:1px solid #dcdcdc"></div>
<div class="abs" style="left:1223px;top:747px;width:15px;height:53px;background:#f8f8f8;border-left:1px solid #e4e4e4"></div>
<div class="abs" style="left:1227px;top:750px;width:8px;height:17.5px;border-radius:4px;background:#c2c2c2"></div>
<div class="lbl mono" style="left:73.4px;top:752px;font-family:'Liberation Mono',monospace;font-size:11.5px;letter-spacing:-0.3px;-webkit-text-stroke:0.15px currentColor;color:#6a6a6a;white-space:pre">11/10/2021, 09:06:21  Filtering Complete</div>
<div class="lbl mono" style="left:73.4px;top:769px;font-family:'Liberation Mono',monospace;font-size:11.5px;letter-spacing:-0.3px;-webkit-text-stroke:0.15px currentColor;color:#6a6a6a;white-space:pre">11/10/2021, 09:06:21  Counting items</div>
<div class="lbl mono" style="left:73.4px;top:786px;font-family:'Liberation Mono',monospace;font-size:11.5px;letter-spacing:-0.3px;-webkit-text-stroke:0.15px currentColor;color:#6a6a6a;white-space:pre">11/10/2021, 09:06:21  Hiding folders that appear empty</div>
<div class="lbl" style="left:66.5px;top:808px;font-size:13.2px;font-weight:bold;color:#1f1f1f">Sync Queue</div>
<div class="lbl" style="left:163.8px;top:808.5px;font-size:12.5px;font-weight:bold;color:#1a62f5">0</div>
<div class="lbl" style="left:190.5px;top:807px;font-size:11.6px;color:#7f7f7f;white-space:pre">Ready and waiting for next job,   Scheduling is DISABLED</div>
<svg class="abs" style="left:1218px;top:802px" width="22" height="22"><circle cx="10.8" cy="11" r="8.6" fill="#9c9c9c"/><path d="M7.6 7.8 L14 14.2 M14 7.8 L7.6 14.2" stroke="#fff" stroke-width="2" stroke-linecap="round"/></svg>
<div class="abs" style="left:880px;top:164px;width:524px;height:420px;border-radius:10px;background:linear-gradient(#fdfdfd 0%,#f3f3f3 45%,#e8e8e8 100%);box-shadow:0 0 0 0.5px rgba(0,0,0,0.2),0 3px 12px rgba(0,0,0,0.22)"></div>
<svg class="abs" style="left:1120px;top:148px" width="44" height="20"><path d="M6 16.5 C9.5 16.5 11.8 15.6 13.6 13.4 L20.7 4.4 Q22 2.8 23.3 4.4 L30.4 13.4 C32.2 15.6 34.5 16.5 38 16.5 Z" fill="#fdfdfd" stroke="rgba(0,0,0,0.22)" stroke-width="0.7"/><rect x="0" y="16.4" width="44" height="4" fill="#fdfdfd"/></svg>
<div class="lbl" style="left:1065px;top:174.5px;font-size:12.2px;font-weight:bold;color:#7b7b7b">Sync Test for Screenshots</div>
<div class="abs" style="left:890.5px;top:205px;width:503px;height:334px;border-radius:5px;background:linear-gradient(#f2f2f2,#e7e7e7);border:1px solid #dedede"></div>
<div class="abs" style="left:1068.5px;top:195.5px;width:147px;height:21px;border-radius:6px;background:#ebebeb;border:1px solid #d8d8d8"></div>
<div class="abs" style="left:1142.6px;top:195.5px;width:73px;height:21px;border-radius:6px;background:#fff;box-shadow:0 0 0 0.6px rgba(0,0,0,0.2),0 1px 1.5px rgba(0,0,0,0.15)"></div>
<div class="lbl" style="left:1081.3px;top:198.5px;font-size:13.6px;color:#2b2b2b">Settings</div>
<div class="lbl" style="left:1154.5px;top:198.5px;font-size:13.4px;color:#1f1f1f">Filtering</div>
<div class="abs" style="left:896px;top:226px;width:12px;height:12px;border-radius:3px;background:linear-gradient(#2b7dff,#1667f6)"></div><svg class="abs" style="left:896px;top:226px" width="12" height="12"><path d="M2.8 6.3 L5 8.8 L9.4 3.2" fill="none" stroke="#fff" stroke-width="1.6" stroke-linecap="round" stroke-linejoin="round"/></svg>
<div class="lbl" style="left:912.5px;top:226px;font-size:11.8px;color:#262626">Show filtered items in outline views</div>
<div class="lbl" style="left:1119.5px;top:226px;font-size:11px;color:#8e8e8e">&#8984;Y</div>
<div class="lbl" style="left:897.4px;top:252px;font-size:13.4px;font-weight:bold;color:#222">Primary Filter</div>
<div class="abs" style="left:896px;top:271.6px;width:12px;height:12px;border-radius:3px;background:linear-gradient(#2b7dff,#1667f6)"></div><svg class="abs" style="left:896px;top:271.6px" width="12" height="12"><path d="M2.8 6.3 L5 8.8 L9.4 3.2" fill="none" stroke="#fff" stroke-width="1.6" stroke-linecap="round" stroke-linejoin="round"/></svg>
<div class="lbl" style="left:912.5px;top:271.5px;font-size:11.8px;color:#262626">Filter out hidden .Files and .Folders (names prefixed with dot)</div>
<div class="abs" style="left:896px;top:291.6px;width:12px;height:12px;border-radius:3px;background:linear-gradient(#2b7dff,#1667f6)"></div><svg class="abs" style="left:896px;top:291.6px" width="12" height="12"><path d="M2.8 6.3 L5 8.8 L9.4 3.2" fill="none" stroke="#fff" stroke-width="1.6" stroke-linecap="round" stroke-linejoin="round"/></svg>
<div class="lbl" style="left:912.5px;top:291.5px;font-size:11.8px;color:#262626">Filter out empty folder trees</div>
<div class="lbl" style="left:897.4px;top:318px;font-size:13.4px;font-weight:bold;color:#222">Secondary Filter Mode</div>
<div class="abs" style="left:895px;top:333.6px;width:490px;height:21px;border-radius:6px;background:#e1e1e1;border:1px solid #d6d6d6"></div>
<div class="abs" style="left:1059.5px;top:338px;width:1px;height:12px;background:#c8c8c8"></div>
<div class="abs" style="left:1222.9px;top:334px;width:161.5px;height:20.5px;border-radius:6px;background:#fff;box-shadow:0 0 0 0.6px rgba(0,0,0,0.2),0 1px 1.5px rgba(0,0,0,0.15)"></div>
<div class="lbl" style="left:960.5px;top:338px;font-size:13.3px;color:#2b2b2b">None</div>
<div class="lbl" style="left:1105.2px;top:338px;font-size:13.6px;color:#2b2b2b">Differences</div>
<div class="lbl" style="left:1280.2px;top:338px;font-size:13.3px;color:#1f1f1f">Custom</div>
<div class="lbl" style="right:55.6px;top:357px;font-size:11.95px;color:#8a8a8a">Apply the custom filters defined below</div>
<div class="abs" style="left:1352.5px;top:377px;width:34px;height:20.7px;border-radius:5px;background:#f7f7f7;border:1px solid #d4d4d4;box-shadow:0 0.5px 1px rgba(0,0,0,0.08)"></div>
<svg class="abs" style="left:1352.5px;top:377px" width="34" height="21"><circle cx="12.3" cy="10" r="5.6" fill="none" stroke="#444" stroke-width="1.2"/><path d="M9.3 10 H15.3" stroke="#444" stroke-width="0.7"/><circle cx="9.8" cy="10" r="0.9" fill="#444"/><circle cx="12.3" cy="10" r="0.9" fill="#444"/><circle cx="14.8" cy="10" r="0.9" fill="#444"/><path d="M21.8 11.8 L24 14 L26.2 11.8" fill="none" stroke="#444" stroke-width="1"/></svg>
<div class="lbl" style="left:896.6px;top:389px;font-size:13.3px;font-weight:bold;color:#222">Custom Filter</div>
<div class="lbl" style="left:1003.3px;top:390px;font-size:12.2px;color:#8a8a8a">filter out items if</div>
<div class="abs" style="left:897px;top:404px;width:489px;height:124px;background:#fff"></div>
<div class="abs" style="left:897px;top:435px;width:489px;height:1px;background:#dadada"></div>
<div class="abs" style="left:897px;top:467px;width:489px;height:1px;background:#dadada"></div>
<div class="abs" style="left:904.3px;top:411.2px;width:148.20000000000005px;height:15.400000000000034px;border:1px solid #a9a9a9;border-radius:4px;background:#fff"></div><div class="lbl" style="left:909.4px;top:413.2px;font-size:10.9px;color:#333">Any</div><svg class="abs" style="left:1040.5px;top:411.2px" width="10" height="15.400000000000034"><path d="M3 6.500000000000017 L5 4.300000000000017 L7 6.500000000000017 M3 8.900000000000016 L5 11.100000000000017 L7 8.900000000000016" fill="none" stroke="#666" stroke-width="0.9"/></svg>
<div class="lbl" style="left:1061px;top:413.5px;font-size:11.97px;color:#2b2b2b">of the following are true</div>
<div class="abs" style="left:1338px;top:411.7px;width:17.200000000000045px;height:15.300000000000011px;border:1px solid #b0b0b0;border-radius:4px;background:#fff"></div><svg class="abs" style="left:1338px;top:411.7px" width="17.200000000000045" height="15.300000000000011"><path d="M4.100000000000023 7.650000000000006 H13.100000000000023" stroke="#444" stroke-width="1"/></svg>
<div class="abs" style="left:1358.3px;top:411.7px;width:17.700000000000045px;height:15.300000000000011px;border:1px solid #b0b0b0;border-radius:4px;background:#fff"></div><svg class="abs" style="left:1358.3px;top:411.7px" width="17.700000000000045" height="15.300000000000011"><path d="M4.350000000000023 7.650000000000006 H13.350000000000023 M8.850000000000023 3.1500000000000057 V12.150000000000006" stroke="#444" stroke-width="1"/></svg>
<div class="abs" style="left:934.3px;top:443.5px;width:152.0px;height:15.100000000000023px;border:1px solid #a9a9a9;border-radius:4px;background:#fff"></div><div class="lbl" style="left:939.5px;top:443.7px;font-size:11.62px;color:#333">File compare status</div><svg class="abs" style="left:1074.3px;top:443.5px" width="10" height="15.100000000000023"><path d="M3 6.350000000000011 L5 4.150000000000011 L7 6.350000000000011 M3 8.75000000000001 L5 10.950000000000012 L7 8.75000000000001" fill="none" stroke="#666" stroke-width="0.9"/></svg>
<div class="lbl" style="left:1095px;top:445px;font-size:11.8px;color:#2b2b2b">is</div>
<div class="abs" style="left:1112.5px;top:443.5px;width:222.9000000000001px;height:15.100000000000023px;border:1px solid #a9a9a9;border-radius:4px;background:#fff"></div><div class="lbl" style="left:1117.7px;top:443.7px;font-size:11.7px;color:#333">same Modified Date on both sides</div><svg class="abs" style="left:1323.4px;top:443.5px" width="10" height="15.100000000000023"><path d="M3 6.350000000000011 L5 4.150000000000011 L7 6.350000000000011 M3 8.75000000000001 L5 10.950000000000012 L7 8.75000000000001" fill="none" stroke="#666" stroke-width="0.9"/></svg>
<div class="abs" style="left:1338px;top:443.5px;width:17.200000000000045px;height:15.100000000000023px;border:1px solid #b0b0b0;border-radius:4px;background:#fff"></div><svg class="abs" style="left:1338px;top:443.5px" width="17.200000000000045" height="15.100000000000023"><path d="M4.100000000000023 7.550000000000011 H13.100000000000023" stroke="#444" stroke-width="1"/></svg>
<div class="abs" style="left:1358.3px;top:443.5px;width:17.700000000000045px;height:15.100000000000023px;border:1px solid #b0b0b0;border-radius:4px;background:#fff"></div><svg class="abs" style="left:1358.3px;top:443.5px" width="17.700000000000045" height="15.100000000000023"><path d="M4.350000000000023 7.550000000000011 H13.350000000000023 M8.850000000000023 3.0500000000000114 V12.050000000000011" stroke="#444" stroke-width="1"/></svg>
<div class="abs" style="left:888px;top:558px;width:12px;height:12px;border-radius:3px;background:linear-gradient(#2b7dff,#1667f6)"></div><svg class="abs" style="left:888px;top:558px" width="12" height="12"><path d="M2.8 6.3 L5 8.8 L9.4 3.2" fill="none" stroke="#fff" stroke-width="1.6" stroke-linecap="round" stroke-linejoin="round"/></svg>
<div class="lbl" style="left:904.4px;top:557.5px;font-size:11.69px;color:#262626">Expand All Items in Outline Views on Apply</div>
<div class="abs" style="left:1242.75px;top:555px;width:68.5px;height:20px;border-radius:5px;background:#fff;box-shadow:0 0 0 0.5px rgba(0,0,0,0.16),0 1px 1px rgba(0,0,0,0.14)"></div>
<div class="lbl" style="left:1257.75px;top:558.5px;font-size:12.3px;color:#262626">Cancel</div>
<div class="abs" style="left:1325px;top:555px;width:68px;height:20px;border-radius:5px;background:linear-gradient(#2d7dff,#1668f6);box-shadow:0 0.5px 1px rgba(0,0,0,0.15)"></div>
<div class="lbl" style="left:1343px;top:558.5px;font-size:12.5px;color:#fff">Apply</div>
</body></html>
